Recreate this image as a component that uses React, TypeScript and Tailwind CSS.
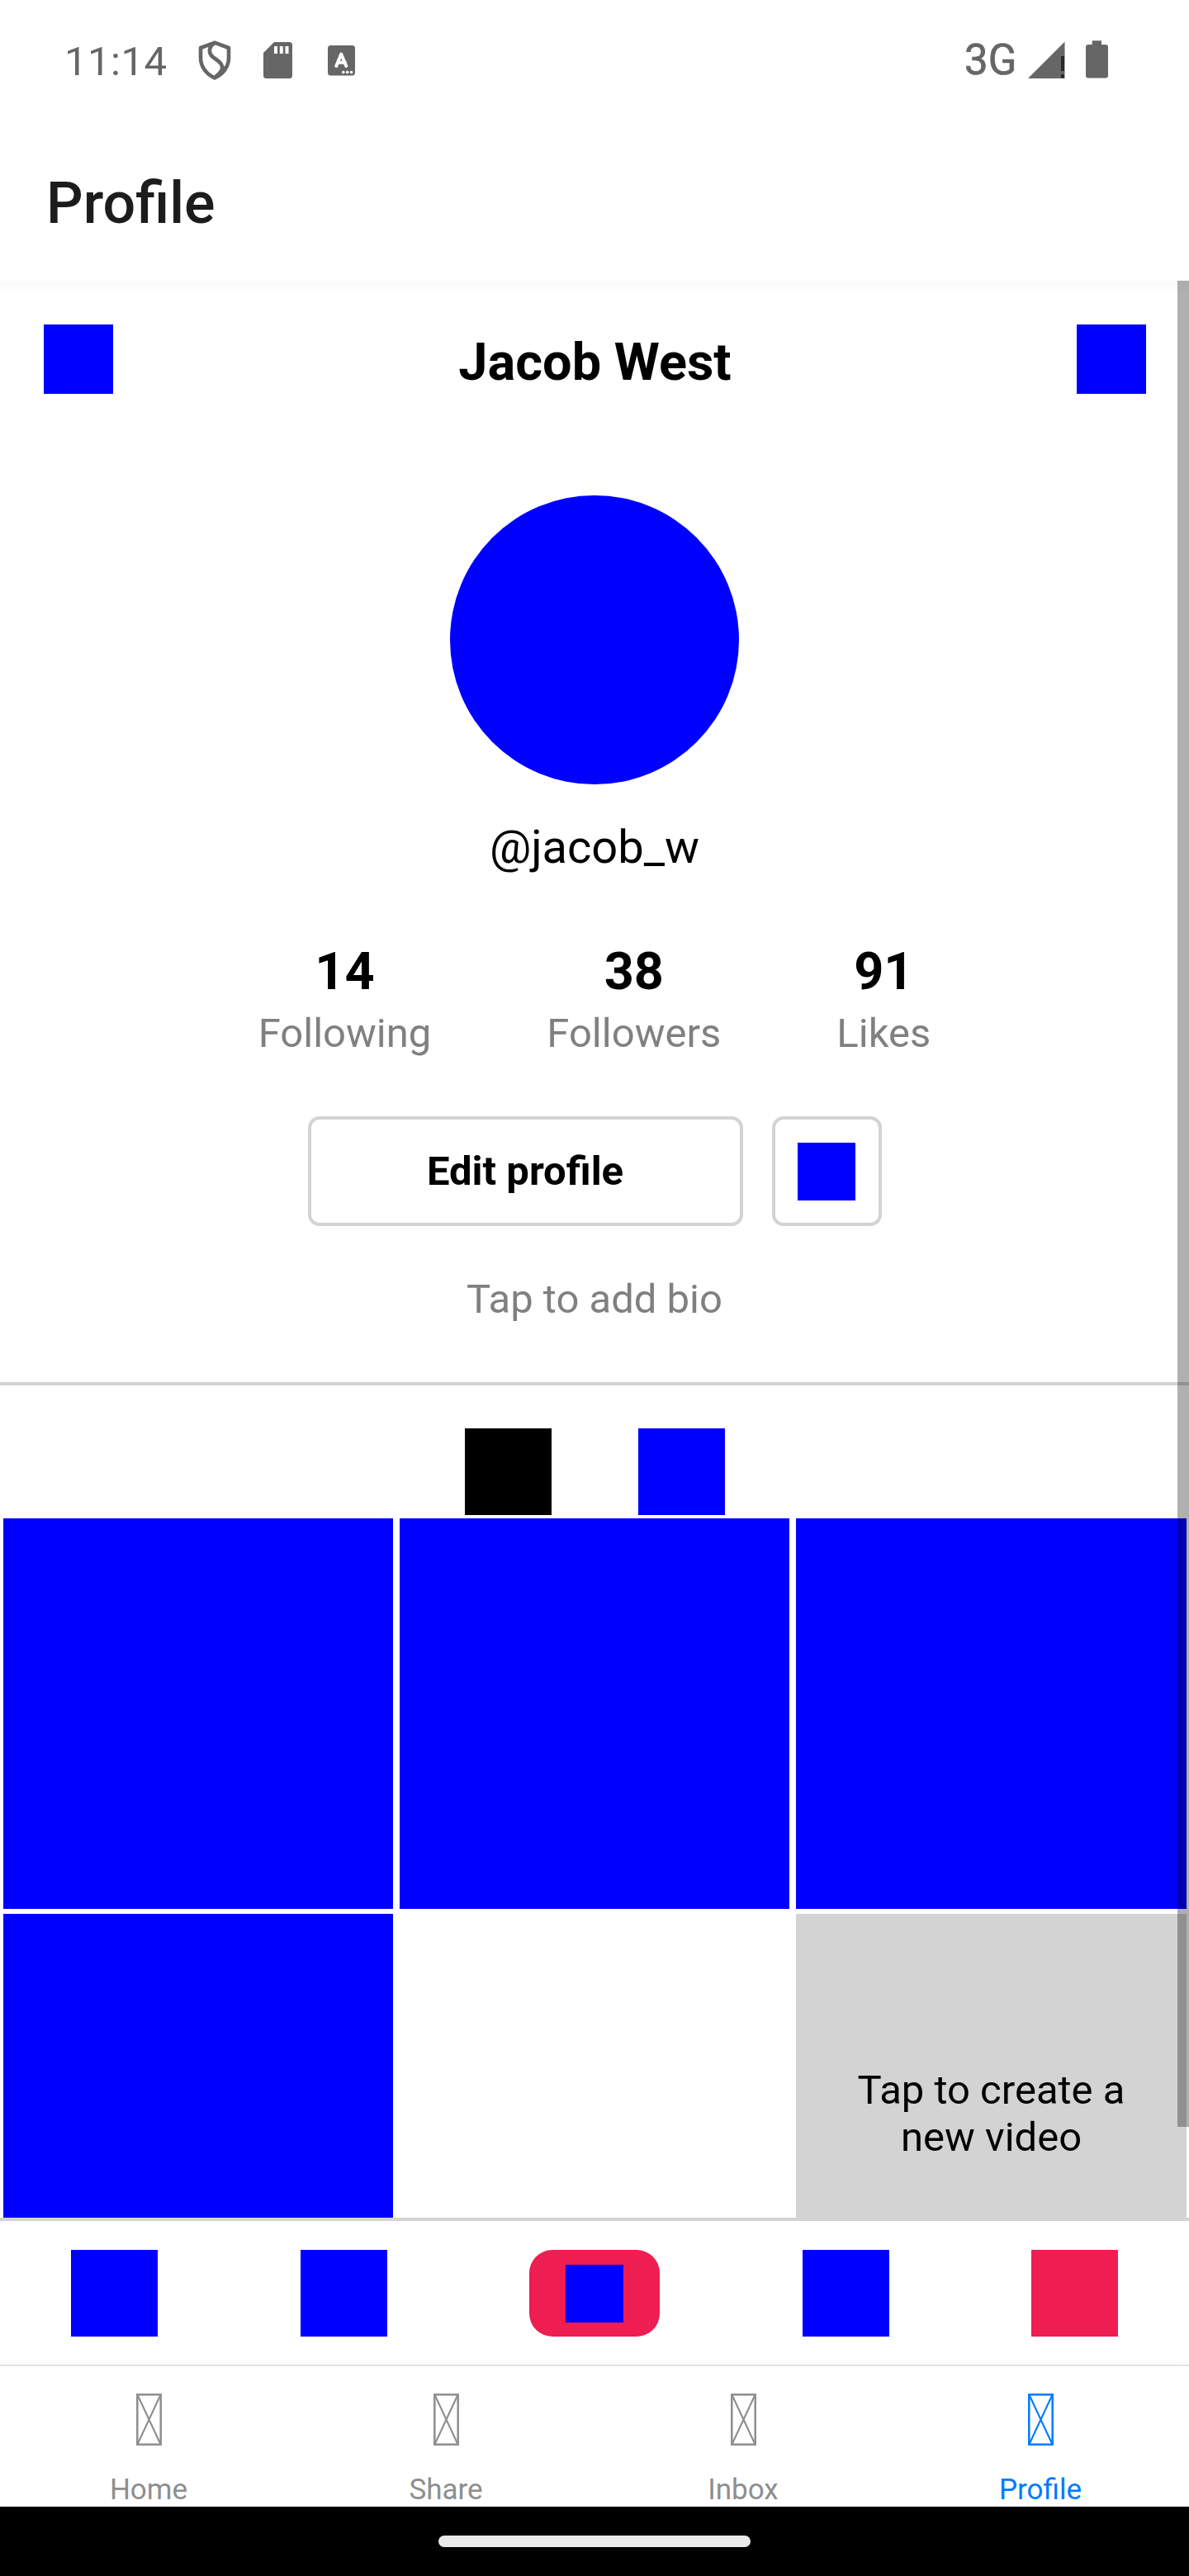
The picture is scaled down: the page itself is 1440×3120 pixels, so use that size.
import React from "react";

function ShieldIcon() {
  return (
    <svg className="h-[48px] w-[40px]" viewBox="0 0 40 48" fill="none" stroke="#666666" strokeWidth="4.6" strokeLinejoin="round">
      <path d="M20 2.6 L37 9 V21 C37 32 30 41 20 45.4 C10 41 3 32 3 21 V9 Z" />
      <path d="M20 3 C12 8 12 16 19 21 C28 27 31 30 28 39" />
      <path d="M31 31 C29 36 26 40 21 44" />
    </svg>
  );
}

function SdCardIcon() {
  return (
    <svg className="h-[44px] w-[35px]" viewBox="0 0 35 44">
      <path fill="#666666" d="M13 0 H31.500 Q35 0 35 3.500 V40.500 Q35 44 31.500 44 H3.500 Q0 44 0 40.500 V13 Z" />
      <path fill="#ffffff" d="M13 5h4v9h-4zM19.800 5h4v9h-4zM26.500 5h4v9h-4z" />
    </svg>
  );
}

function KeyboardIcon() {
  return (
    <svg className="h-[37px] w-[33px]" viewBox="0 0 33 37">
      <rect width="33" height="36.500" rx="3.500" fill="#666666" />
      <path d="M10.300 25 L16.200 10.500 L22.300 25 M12 20.800 H21" fill="none" stroke="#ffffff" strokeWidth="4" strokeLinecap="round" strokeLinejoin="round" />
      <circle cx="18.800" cy="32.500" r="1.800" fill="#ffffff" />
      <circle cx="23.700" cy="32.500" r="1.800" fill="#ffffff" />
      <circle cx="28.600" cy="32.500" r="1.800" fill="#ffffff" />
    </svg>
  );
}

function SignalIcon() {
  return (
    <svg className="h-[45px] w-[45px]" viewBox="0 0 45 45">
      <path d="M0 45 L44.500 0.500 V45 Z" fill="#666666" />
      <path d="M40 18h4v18h-4zM40 40h4v4.500h-4z" fill="#292929" />
    </svg>
  );
}

function BatteryIcon() {
  return (
    <svg className="h-[46px] w-[27px]" viewBox="0 0 27 46">
      <path d="M7.700 0.300H19V5H24Q27 5 27 8V42.500Q27 45.500 24 45.500H3Q0 45.500 0 42.500V8Q0 5 3 5H7.700Z" fill="#666666" />
    </svg>
  );
}

function MissingGlyph() {
  return (
    <svg className="h-[63px] w-[31px]" viewBox="0 0 31 63" fill="none" stroke="currentColor">
      <rect x="1.300" y="1.300" width="28.400" height="60.400" strokeWidth="2.500" />
      <path d="M1.500 1.500 L29.500 61.500 M29.500 1.500 L1.500 61.500" strokeWidth="2.100" />
    </svg>
  );
}

function StatusBar() {
  return (
    <div className="flex h-[150px] items-start justify-between pr-[98px] pl-[78px] text-[#666666]">
      <div className="flex items-start">
        <span className="mt-[46px] w-[162px] text-[49px] leading-[57px] tracking-[0.5px]">11:14</span>
        <span className="mt-[49px] w-[79px]"><ShieldIcon /></span>
        <span className="mt-[51px] w-[78px]"><SdCardIcon /></span>
        <span className="mt-[55px]"><KeyboardIcon /></span>
      </div>
      <div className="flex items-start">
        <span className="mt-[44px] w-[77px] text-[51px] leading-[57px] [-webkit-text-stroke:0.7px_#666666]">3G</span>
        <span className="mt-[50px] w-[70px]"><SignalIcon /></span>
        <span className="mt-[49px]"><BatteryIcon /></span>
      </div>
    </div>
  );
}

const stats = [
  { value: "14", label: "Following" },
  { value: "38", label: "Followers" },
  { value: "91", label: "Likes" },
];

const tabs = [
  { label: "Home", active: false },
  { label: "Share", active: false },
  { label: "Inbox", active: false },
  { label: "Profile", active: true },
];

function ProfileContent() {
  return (
    <main className="relative h-[2346px] shrink-0 overflow-hidden bg-white">
      <div className="absolute inset-x-0 top-0 h-[14px] bg-linear-to-b from-[#fafafa] to-white" />
      <div className="relative flex flex-col items-center pt-[53px]">
        <div className="flex h-[84px] w-full items-center justify-between pr-[52px] pl-[53px]">
          <div className="size-[84px] bg-[#0000ff]" />
          <h2 className="pt-[7px] text-[63px] leading-[74px] font-bold">Jacob West</h2>
          <div className="size-[84px] bg-[#0000ff]" />
        </div>
        <div className="mt-[123px] size-[350px] rounded-full bg-[#0000ff]" />
        <p className="mt-[43px] text-[56px] leading-[66px]">@jacob_w</p>
        <div className="mt-[81px] flex gap-[140px]">
          {stats.map((s) => (
            <div key={s.label} className="flex flex-col items-center">
              <span className="text-[63px] leading-[74px] font-bold">{s.value}</span>
              <span className="mt-[9px] text-[49px] leading-[57px] text-[#808080]">{s.label}</span>
            </div>
          ))}
        </div>
        <div className="mt-[72px] flex gap-[35px]">
          <button className="flex h-[133px] w-[527px] items-center justify-center rounded-[14px] border-4 border-[#d3d3d3] text-[49px] leading-[57px] font-bold">
            Edit profile
          </button>
          <button className="flex size-[133px] items-center justify-center rounded-[14px] border-4 border-[#d3d3d3]">
            <span className="size-[70px] bg-[#0000ff]" />
          </button>
        </div>
        <p className="mt-[60px] text-[49px] leading-[57px] text-[#808080]">Tap to add bio</p>
        <div className="mt-[72px] flex h-[165px] w-full justify-center gap-[105px] border-t-4 border-[#d3d3d3] pt-[52px]">
          <div className="size-[105px] bg-black" />
          <div className="size-[105px] bg-[#0000ff]" />
        </div>
        <div className="grid w-full auto-rows-[473px] grid-cols-[472px_472px_473px] gap-x-2 gap-y-1.5 pr-[3px] pl-1">
          <div className="bg-[#0000ff]" />
          <div className="bg-[#0000ff]" />
          <div className="bg-[#0000ff]" />
          <div className="bg-[#0000ff]" />
          <div />
          <div className="flex items-center justify-center bg-[#d3d3d3] px-[70px] pt-[10px] text-center text-[49px] leading-[57px]">
            Tap to create a new video
          </div>
        </div>
      </div>
      <div className="absolute top-0 right-0 h-[2236px] w-[14px] bg-black/31" />
    </main>
  );
}

export default function App() {
  return (
    <div className="flex h-[3120px] w-[1440px] flex-col overflow-hidden bg-white font-['Roboto',sans-serif] text-black">
      <header className="h-[340px] shrink-0">
        <StatusBar />
        <h1 className="mt-[55px] ml-[56px] text-[70px] leading-[82px] font-medium text-[#1c1c1e]">Profile</h1>
      </header>
      <ProfileContent />
      <div className="flex h-[178px] shrink-0 justify-between border-t-4 border-[#d3d3d3] px-[86px] pt-[35px]">
        <div className="size-[105px] bg-[#0000ff]" />
        <div className="size-[105px] bg-[#0000ff]" />
        <div className="flex h-[105px] w-[158px] items-center justify-center rounded-[28px] bg-[#ee1d52]">
          <div className="size-[70px] bg-[#0000ff]" />
        </div>
        <div className="size-[105px] bg-[#0000ff]" />
        <div className="size-[105px] bg-[#ee1d52]" />
      </div>
      <nav className="grid h-[172px] shrink-0 grid-cols-4 border-t-2 border-[#e5e5e5] bg-white shadow-[0_-2px_8px_rgba(0,0,0,0.04)]">
        {tabs.map((t) => (
          <div key={t.label} className={t.active ? "flex flex-col items-center pt-[33px] text-[#007aff]" : "flex flex-col items-center pt-[33px] text-[#8e8e8f]"}>
            <MissingGlyph />
            <span className="mt-[33px] text-[35px] leading-[41px]">{t.label}</span>
          </div>
        ))}
      </nav>
      <div className="flex h-[84px] shrink-0 justify-center bg-black pt-[35px]">
        <div className="h-[14px] w-[378px] rounded-full bg-[#eaeaea]" />
      </div>
    </div>
  );
}
